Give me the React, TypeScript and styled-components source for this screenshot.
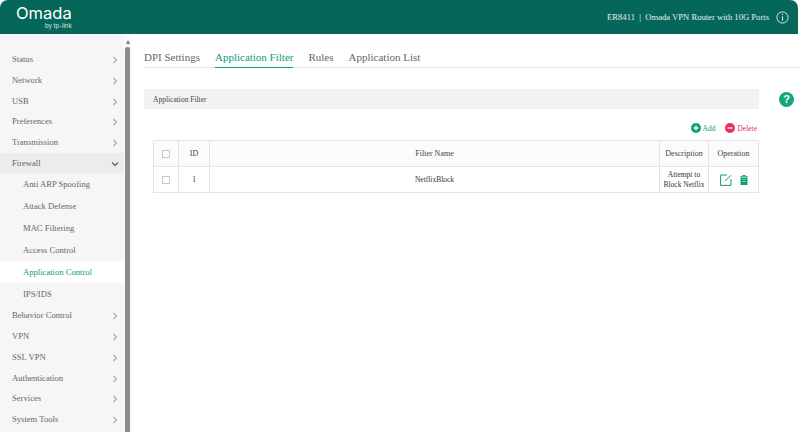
import React from "react";
import styled, { createGlobalStyle } from "styled-components";

const GREEN = "#0d9d77";
const RED = "#e8305f";

const MENU_BEFORE = ["Status", "Network", "USB", "Preferences", "Transmission"];
const SUB_ITEMS = ["Anti ARP Spoofing", "Attack Defense", "MAC Filtering", "Access Control", "Application Control", "IPS/IDS"];
const MENU_AFTER = ["Behavior Control", "VPN", "SSL VPN", "Authentication", "Services", "System Tools"];
const TABS = ["DPI Settings", "Application Filter", "Rules", "Application List"];

const Chevron: React.FC<{ open?: boolean }> = ({ open }) => (
    <ChevronSvg viewBox="0 0 8 8">
        <path d={open ? "M1 2.5 L4 5.5 L7 2.5" : "M2.5 1 L5.5 4 L2.5 7"} fill="none" stroke={open ? "#555" : "#aaa"} strokeWidth="1.1" />
    </ChevronSvg>
);

export default function App() {
    return (
        <Page>
            <GlobalStyle />
            <Header>
                <Logo>
                    <LogoName>Omada</LogoName>
                    <LogoBy>by tp-link</LogoBy>
                </Logo>
                <DeviceInfo>
                    <span>ER8411&nbsp; |&nbsp; Omada VPN Router with 10G Ports</span>
                    <InfoIcon viewBox="0 0 14 14">
                        <circle cx="7" cy="7" r="6" fill="none" stroke="#e6f0ee" strokeWidth="1" />
                        <path d="M7 3.2 V4.4 M7 5.8 V10.6" stroke="#e6f0ee" strokeWidth="1.2" fill="none" />
                    </InfoIcon>
                </DeviceInfo>
            </Header>
            <Body>
                <Sidebar>
                    {MENU_BEFORE.map((m) => (
                        <MenuRow key={m}>{m}<Chevron /></MenuRow>
                    ))}
                    <MenuRow $open>Firewall<Chevron open /></MenuRow>
                    <SubGroup>
                        {SUB_ITEMS.map((s) => (
                            <SubRow key={s} $active={s === "Application Control"}>{s}</SubRow>
                        ))}
                    </SubGroup>
                    {MENU_AFTER.map((m) => (
                        <MenuRow key={m}>{m}<Chevron /></MenuRow>
                    ))}
                </Sidebar>
                <ScrollBar>
                    <ScrollArrow />
                    <ScrollThumb />
                </ScrollBar>
                <Main>
                    <Tabs>
                        {TABS.map((t) => (
                            <Tab key={t} $active={t === "Application Filter"}>{t}</Tab>
                        ))}
                    </Tabs>
                    <SectionRow>
                        <SectionBar>Application Filter</SectionBar>
                        <HelpBadge>?</HelpBadge>
                    </SectionRow>
                    <Content>
                        <Actions>
                            <ActionButton $color={GREEN}>
                                <ActionIcon viewBox="0 0 10 10">
                                    <circle cx="5" cy="5" r="5" fill={GREEN} />
                                    <path d="M2.5 5 H7.5 M5 2.5 V7.5" stroke="#fff" strokeWidth="1.3" />
                                </ActionIcon>
                                Add
                            </ActionButton>
                            <ActionButton $color={RED}>
                                <ActionIcon viewBox="0 0 10 10">
                                    <circle cx="5" cy="5" r="5" fill={RED} />
                                    <path d="M2.5 5 H7.5" stroke="#fff" strokeWidth="1.3" />
                                </ActionIcon>
                                Delete
                            </ActionButton>
                        </Actions>
                        <Table>
                            <colgroup>
                                <col width="25" />
                                <col width="31" />
                                <col />
                                <col width="49" />
                                <col width="50" />
                            </colgroup>
                            <thead>
                                <tr>
                                    <HeadCell><CheckBox /></HeadCell>
                                    <HeadCell>ID</HeadCell>
                                    <HeadCell>Filter Name</HeadCell>
                                    <HeadCell>Description</HeadCell>
                                    <HeadCell>Operation</HeadCell>
                                </tr>
                            </thead>
                            <tbody>
                                <tr>
                                    <BodyCell><CheckBox /></BodyCell>
                                    <BodyCell>1</BodyCell>
                                    <BodyCell>NetflixBlock</BodyCell>
                                    <BodyCell>Attempt to<br />Block Netflix</BodyCell>
                                    <BodyCell>
                                        <Operations>
                                            <EditIcon viewBox="0 0 12 12">
                                                <path d="M7 1 H0.6 V11.4 H11 V5" fill="none" stroke={GREEN} strokeWidth="1" />
                                                <path d="M5 7.2 L11 1.2" fill="none" stroke={GREEN} strokeWidth="1" />
                                            </EditIcon>
                                            <TrashIcon viewBox="0 0 8 10">
                                                <path d="M2.5 0 H5.5 V1 H8 V1.8 H0 V1 H2.5 Z" fill={GREEN} />
                                                <path d="M0.6 2.5 H7.4 V10 H0.6 Z" fill={GREEN} />
                                                <path d="M2.2 4.5 H5.8 M2.2 6.5 H5.8" stroke="#bfe8dc" strokeWidth="0.7" />
                                            </TrashIcon>
                                        </Operations>
                                    </BodyCell>
                                </tr>
                            </tbody>
                        </Table>
                    </Content>
                </Main>
            </Body>
        </Page>
    );
}

const GlobalStyle = createGlobalStyle`
    html, body {
        margin: 0;
        padding: 0;
        background: #fff;
        overflow: hidden;
    }
    * {
        box-sizing: border-box;
    }
`;

const Page = styled.div`
    width: 800px;
    height: 432px;
    display: flex;
    flex-direction: column;
    overflow: hidden;
    font-family: "Liberation Serif", serif;
    color: #555;
`;

const Header = styled.header`
    height: 34px;
    margin-right: 2px;
    flex: none;
    display: flex;
    align-items: center;
    justify-content: space-between;
    padding: 0 9px 0 16px;
    background: #05675a;
    border-radius: 8px 8px 0 0;
`;

const Logo = styled.div`
    display: flex;
    flex-direction: column;
    align-items: flex-end;
    color: #fff;
    font-family: "Inter", "Liberation Sans", sans-serif;
`;

const LogoName = styled.div`
    font-size: 16.5px;
    line-height: 18px;
`;

const LogoBy = styled.div`
    font-size: 6px;
    line-height: 8px;
    color: #d5e6e2;
`;

const DeviceInfo = styled.div`
    display: flex;
    align-items: center;
    gap: 7px;
    font-size: 8.6px;
    color: #e6f0ee;
`;

const InfoIcon = styled.svg`
    width: 13px;
    height: 13px;
`;

const Body = styled.div`
    flex: 1;
    display: flex;
    min-height: 0;
`;

const Sidebar = styled.nav`
    width: 124px;
    flex: none;
    background: #f6f6f6;
    padding-top: 14.6px;
`;

const MenuRow = styled.div<{ $open?: boolean }>`
    height: 20.8px;
    display: flex;
    align-items: center;
    justify-content: space-between;
    padding: 0 5px 0 12px;
    font-size: 8.6px;
    color: #666;
    background: ${(p) => (p.$open ? "#ececec" : "transparent")};
`;

const SubGroup = styled.div`
    margin-bottom: -0.6px;
`;

const SubRow = styled.div<{ $active?: boolean }>`
    height: 22px;
    display: flex;
    align-items: center;
    padding-left: 23px;
    font-size: 8.6px;
    color: ${(p) => (p.$active ? GREEN : "#666")};
    background: ${(p) => (p.$active ? "#fff" : "transparent")};
`;

const ChevronSvg = styled.svg`
    width: 8px;
    height: 8px;
    margin-top: 2px;
`;

const ScrollBar = styled.div`
    width: 7px;
    flex: none;
    display: flex;
    flex-direction: column;
    align-items: center;
    background: #fafafa;
    padding-top: 6px;
`;

const ScrollArrow = styled.div`
    width: 0;
    height: 0;
    border-left: 2.5px solid transparent;
    border-right: 2.5px solid transparent;
    border-bottom: 4px solid #777;
`;

const ScrollThumb = styled.div`
    flex: 1;
    width: 5px;
    margin-top: 3px;
    background: #8c8c8c;
    border-radius: 2px 2px 0 0;
`;

const Main = styled.main`
    flex: 1;
    min-width: 0;
    padding-left: 13px;
`;

const Tabs = styled.div`
    height: 34px;
    padding-top: 6px;
    display: flex;
    gap: 15px;
    border-bottom: 1px solid #e6e6e6;
`;

const Tab = styled.div<{ $active?: boolean }>`
    height: 28px;
    line-height: 34px;
    font-size: 11px;
    color: ${(p) => (p.$active ? GREEN : "#666")};
    border-bottom: ${(p) => (p.$active ? `1px solid ${GREEN}` : "none")};
`;

const SectionRow = styled.div`
    display: flex;
    align-items: center;
    margin-top: 21px;
`;

const SectionBar = styled.div`
    width: 615px;
    height: 20px;
    display: flex;
    align-items: center;
    padding-left: 9px;
    background: #f2f2f2;
    font-size: 7.5px;
    color: #444;
`;

const HelpBadge = styled.div`
    width: 15px;
    height: 15px;
    margin-left: 20px;
    border-radius: 50%;
    background: #12a77f;
    color: #fff;
    display: flex;
    align-items: center;
    justify-content: center;
    font-family: "Liberation Sans", sans-serif;
    font-weight: bold;
    font-size: 11px;
`;

const Content = styled.div`
    width: 616px;
    padding-left: 9px;
`;

const Actions = styled.div`
    display: flex;
    justify-content: flex-end;
    align-items: center;
    gap: 10px;
    height: 16px;
    margin-top: 11px;
    margin-bottom: 4px;
    padding-right: 3px;
`;

const ActionButton = styled.div<{ $color: string }>`
    display: flex;
    align-items: center;
    gap: 2px;
    font-size: 7.5px;
    color: ${(p) => p.$color};
`;

const ActionIcon = styled.svg`
    width: 10px;
    height: 10px;
`;

const Table = styled.table`
    width: 606px;
    table-layout: fixed;
    border-collapse: collapse;
    font-size: 8px;
    color: #444;
`;

const HeadCell = styled.th`
    height: 26px;
    padding: 0;
    border: 1px solid #e4e4e4;
    background: #fbfbfb;
    font-weight: normal;
    text-align: center;
`;

const BodyCell = styled.td`
    height: 26px;
    padding: 0;
    border: 1px solid #e4e4e4;
    text-align: center;
    font-size: 7.5px;
    line-height: 9.5px;
    color: #333;
`;

const CheckBox = styled.span`
    display: inline-block;
    width: 8px;
    height: 8px;
    border: 1px solid #c8c8c8;
    vertical-align: middle;
`;

const Operations = styled.div`
    display: flex;
    justify-content: center;
    align-items: center;
    gap: 8px;
`;

const EditIcon = styled.svg`
    width: 12px;
    height: 12px;
`;

const TrashIcon = styled.svg`
    width: 8px;
    height: 10px;
`;
